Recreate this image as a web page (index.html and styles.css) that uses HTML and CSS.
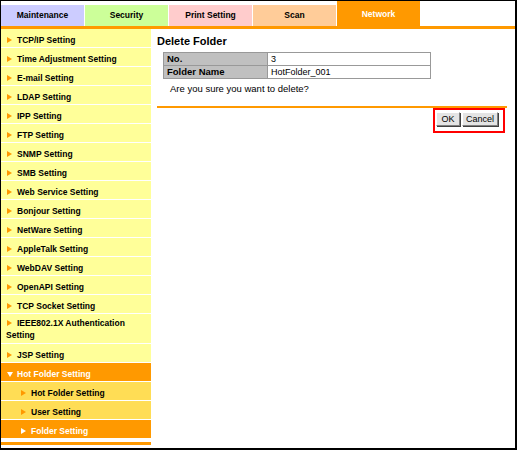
FILE: index.html
```html
<!DOCTYPE html>
<html>
<head>
  <title>Delete Folder</title>
  <link rel="stylesheet" href="styles.css">
</head>
<body>
  <div class="frame">
    <div class="tabs">
      <div class="tab tab-maint">Maintenance</div>
      <div class="tab tab-security">Security</div>
      <div class="tab tab-print">Print Setting</div>
      <div class="tab tab-scan">Scan</div>
      <div class="tab tab-network active">Network</div>
    </div>
    <div class="main">
      <div class="sidebar">
        <ul class="menu">
          <li class="menu-item"><span class="arrow"></span>TCP/IP Setting</li>
          <li class="menu-item"><span class="arrow"></span>Time Adjustment Setting</li>
          <li class="menu-item"><span class="arrow"></span>E-mail Setting</li>
          <li class="menu-item"><span class="arrow"></span>LDAP Setting</li>
          <li class="menu-item"><span class="arrow"></span>IPP Setting</li>
          <li class="menu-item"><span class="arrow"></span>FTP Setting</li>
          <li class="menu-item"><span class="arrow"></span>SNMP Setting</li>
          <li class="menu-item"><span class="arrow"></span>SMB Setting</li>
          <li class="menu-item"><span class="arrow"></span>Web Service Setting</li>
          <li class="menu-item"><span class="arrow"></span>Bonjour Setting</li>
          <li class="menu-item"><span class="arrow"></span>NetWare Setting</li>
          <li class="menu-item"><span class="arrow"></span>AppleTalk Setting</li>
          <li class="menu-item"><span class="arrow"></span>WebDAV Setting</li>
          <li class="menu-item"><span class="arrow"></span>OpenAPI Setting</li>
          <li class="menu-item"><span class="arrow"></span>TCP Socket Setting</li>
          <li class="menu-item menu-item-wrap"><span class="arrow"></span>IEEE802.1X Authentication Setting</li>
          <li class="menu-item"><span class="arrow"></span>JSP Setting</li>
          <li class="menu-item menu-open"><span class="arrow-down"></span>Hot Folder Setting</li>
          <li class="menu-item menu-sub"><span class="arrow"></span>Hot Folder Setting</li>
          <li class="menu-item menu-sub"><span class="arrow"></span>User Setting</li>
          <li class="menu-item menu-sub menu-current"><span class="arrow"></span>Folder Setting</li>
        </ul>
        <div class="menu-end"></div>
      </div>
      <div class="content">
        <h1 class="page-title">Delete Folder</h1>
        <table class="info-table">
          <tr>
            <td class="info-label">No.</td>
            <td class="info-value">3</td>
          </tr>
          <tr>
            <td class="info-label">Folder Name</td>
            <td class="info-value">HotFolder_001</td>
          </tr>
        </table>
        <p class="message">Are you sure you want to delete?</p>
        <div class="divider"></div>
        <div class="actions">
          <span class="highlight">
            <button class="btn btn-ok">OK</button>
            <button class="btn btn-cancel">Cancel</button>
          </span>
        </div>
      </div>
    </div>
  </div>
</body>
</html>
```

FILE: styles.css
```css
* {
  box-sizing: border-box;
}
body {
  margin: 0;
  font-family: "Liberation Sans", Arial, sans-serif;
  background: #fff;
}
.frame {
  width: 517px;
  height: 450px;
  border-style: solid;
  border-color: #000;
  border-width: 1px 2px 2px 1px;
  overflow: hidden;
}
.tabs {
  display: flex;
  align-items: flex-end;
  gap: 1px;
  height: 28px;
  border-bottom: 3px solid #ff9900;
}
.tab {
  width: 83px;
  height: 21px;
  padding-top: 4px;
  line-height: 12px;
  font-size: 8.5px;
  font-weight: bold;
  text-align: center;
  color: #000;
}
.tab-maint {
  background: #ccccff;
}
.tab-security {
  background: #ccff99;
}
.tab-print {
  background: #ffcccc;
}
.tab-scan {
  background: #ffcc99;
}
.tab-network {
  background: #ff9900;
}
.tab.active {
  height: 25px;
  padding-top: 7px;
  color: #fff;
}
.main {
  display: flex;
}
.sidebar {
  width: 150px;
  flex-shrink: 0;
}
.menu {
  list-style: none;
  margin: 0;
  padding: 0;
}
.menu-item {
  height: 19px;
  padding: 5px 4px 0 5px;
  line-height: 12px;
  font-size: 8.5px;
  font-weight: bold;
  color: #000;
  background: #ffff99;
  border-bottom: 1px solid #fff;
}
.menu-item-wrap {
  height: 30px;
  padding-top: 3px;
}
.arrow {
  display: inline-block;
  width: 0;
  height: 0;
  margin: 0 5px 0 1px;
  border-left: 5px solid #ff9900;
  border-top: 3px solid transparent;
  border-bottom: 3px solid transparent;
}
.arrow-down {
  display: inline-block;
  width: 0;
  height: 0;
  margin: 0 4px 0 1px;
  border-top: 5px solid #fff;
  border-left: 3px solid transparent;
  border-right: 3px solid transparent;
}
.menu-open {
  background: #ff9900;
  color: #fff;
}
.menu-sub {
  padding-left: 19px;
  background: #ffdd55;
}
.menu-current {
  background: #ff9900;
  color: #fff;
}
.menu-current .arrow {
  border-left-color: #fff;
}
.menu-end {
  height: 3px;
  margin-top: 3px;
  background: #ff9900;
}
.content {
  flex: 1;
  padding: 6px 8px 0 6px;
}
.page-title {
  margin: 0 0 4px 0;
  font-size: 11px;
  line-height: 13px;
  color: #000;
}
.info-table {
  margin-left: 6px;
  width: 268px;
  border-collapse: collapse;
  font-size: 9.5px;
}
.info-table td {
  height: 13px;
  padding: 0 3px;
  line-height: 12px;
  border: 1px solid #999;
}
.info-label {
  width: 104px;
  font-weight: bold;
  background: #c0c0c0;
}
.info-value {
  font-size: 9px;
  background: #fff;
}
.message {
  margin: 4px 0 0 0;
  padding-left: 13px;
  font-size: 9.5px;
  line-height: 12px;
}
.divider {
  height: 2px;
  margin-top: 11px;
  background: #ff9900;
}
.actions {
  display: flex;
  justify-content: flex-end;
  padding-right: 2px;
}
.highlight {
  display: flex;
  gap: 2px;
  padding: 2px 5px 5px 1px;
  border: 2px solid #ff0000;
}
.btn {
  height: 14px;
  padding: 0 3px;
  font-family: "Liberation Sans", Arial, sans-serif;
  font-size: 9px;
  line-height: 10px;
  color: #000;
  background: #e4e4e4;
  border: 1px solid;
  border-color: #fff #808080 #808080 #fff;
  box-shadow: 1px 1px 0 #404040;
}
.btn-ok {
  width: 24px;
}
.btn-cancel {
  width: 36px;
}
```
